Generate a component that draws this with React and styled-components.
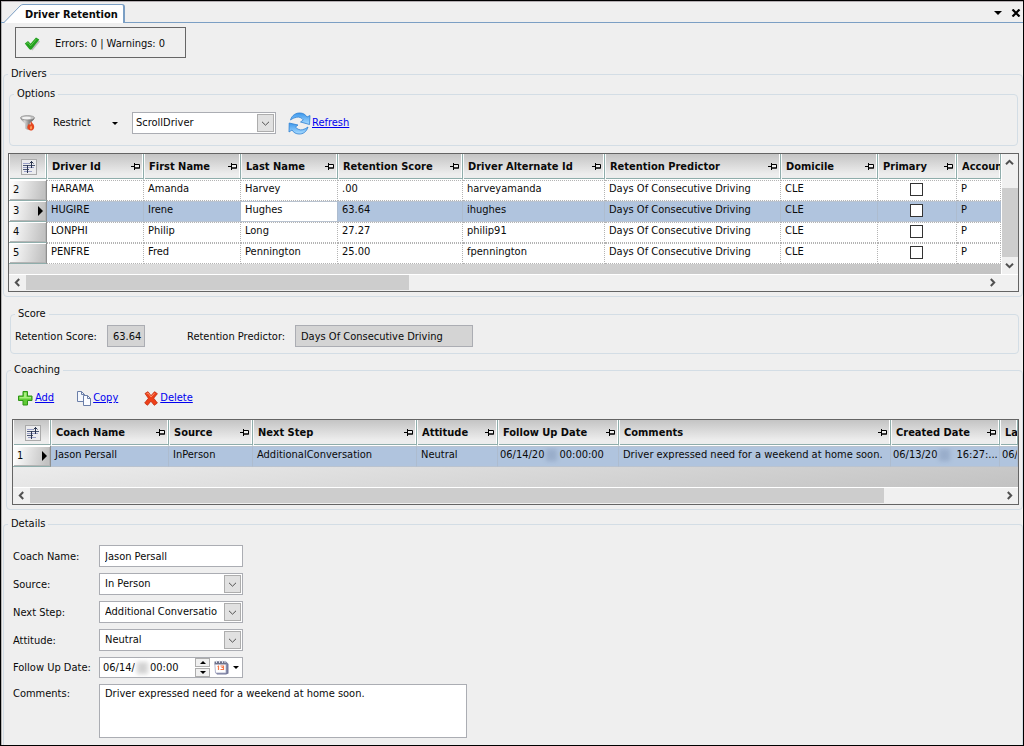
import React from "react";
import styled, { createGlobalStyle } from "styled-components";

const Global = createGlobalStyle`
  *, *::before, *::after { box-sizing: border-box; }
  body { margin: 0; background: #efefef; }
  body, button, input, select, textarea {
    font-family: "DejaVu Sans Condensed", "Noto Sans", sans-serif;
    font-size: 11px;
    line-height: 14px;
    color: #0a0a0a;
  }
`;

const Shell = styled.div`
  min-height: 100vh;
  display: flex;
  flex-direction: column;
  background: #efefef;
  border: 1px solid #000;
  box-shadow: inset 1px 0 0 #b5b5b5;
  overflow: hidden;
`;

const TabBar = styled.header`
  display: flex;
  justify-content: space-between;
  align-items: flex-end;
  height: 22px;
  padding-left: 3px;
  border-top: 1px solid #b5afb3;
  border-bottom: 1px solid #7b9fc4;
`;

const Tab = styled.div`
  display: flex;
  height: 19px;
  margin-bottom: -1px;
`;

const TabFace = styled.h1`
  margin: 0;
  height: 19px;
  padding: 3px 5px 0 2px;
  font-size: 11px;
  line-height: 14px;
  white-space: nowrap;
  background: #fff;
  border-top: 1px solid #7b9fc4;
  border-right: 2px solid #7b9fc4;
  border-top-right-radius: 3px;
`;

const TabTools = styled.div`
  display: flex;
  align-items: center;
  gap: 9px;
  height: 18px;
  padding-right: 2px;
`;

const IconButton = styled.button`
  display: flex;
  align-items: center;
  justify-content: center;
  padding: 0;
  border: 0;
  background: none;
`;

const Page = styled.main`
  flex: 1;
  display: flex;
  flex-direction: column;
  padding: 4px 0 0 2px;
`;

const StatusBox = styled.div`
  align-self: flex-start;
  display: flex;
  align-items: center;
  gap: 14px;
  width: 171px;
  height: 31px;
  margin: 0 0 9px 12px;
  padding: 3px 8px 0;
  border: 1px solid #666;
  white-space: nowrap;
`;

const Group = styled.fieldset`
  min-width: 0;
  margin: ${(p) => p.$margin || "0"};
  padding: ${(p) => p.$padding || "0 3px 4px 4px"};
  border: 1px solid #d3dde5;
  border-radius: 4px;
  ${(p) => p.$open && "flex: 1; border-bottom: 0; border-radius: 4px 4px 0 0;"}
`;

const Legend = styled.legend`
  padding: 0 3px;
  line-height: 14px;
`;

const Row = styled.div`
  display: flex;
  align-items: center;
`;

const RestrictButton = styled.button`
  display: flex;
  align-items: center;
  width: 84px;
  padding: 0 14px 0 5px;
  border: 0;
  background: none;
`;

const RestrictText = styled.span`
  flex: 1;
  text-align: left;
`;

const SelectBox = styled.div`
  position: relative;
  width: 144px;
  height: 22px;
`;

const SelectField = styled.select`
  appearance: none;
  width: 100%;
  height: 22px;
  margin: 0;
  padding: 0 20px 0 ${(p) => (p.$tight ? "3px" : "5px")};
  border: 1px solid #abadb3;
  border-radius: 0;
  background: #fff;
`;

const SelectArrow = styled.span`
  position: absolute;
  top: 2px;
  right: 2px;
  width: 17px;
  height: 18px;
  display: flex;
  align-items: center;
  justify-content: center;
  border: 1px solid #adadad;
  background: #e1e1e1;
  pointer-events: none;
`;

const ActionLink = styled.a`
  display: flex;
  align-items: center;
  gap: ${(p) => p.$gap || "2px"};
  color: #0000f0;
  text-decoration: underline;
`;

const GridFrame = styled.div`
  border: 1px solid #646464;
  background: #f0f0f0;
  margin: ${(p) => p.$margin || "0"};
`;

const GridTop = styled.div`
  display: flex;
`;

const GridView = styled.div`
  flex: 1;
  min-width: 0;
  height: ${(p) => p.$height};
  overflow: hidden;
  background: linear-gradient(173deg, #fafafa, #c2c2c2);
`;

const Table = styled.table`
  width: 100%;
  table-layout: fixed;
  border-collapse: separate;
  border-spacing: 0;
`;

const HeadCell = styled.th`
  height: 26px;
  padding: 0;
  overflow: hidden;
  border-left: 1px solid #fafafa;
  border-right: 1px solid #8fadab;
  border-bottom: 1px solid #fff;
  background: linear-gradient(#c4c4c4, #ededed 80%);
  box-shadow: inset 0 -1px 0 #8fadab, inset -1px 0 0 #fff;
`;

const HeadInner = styled.div`
  display: flex;
  align-items: center;
  justify-content: ${(p) => (p.$center ? "center" : "space-between")};
  height: 24px;
  padding: 0 3px 0 4px;
  white-space: nowrap;
`;

const NumberCell = styled.th`
  height: 21px;
  padding: 0;
  border-right: 1px solid #8f8f8f;
  border-bottom: 1px solid #8fadab;
  background: linear-gradient(100deg, #fbfbfb 10%, #c2c2c2 90%);
  box-shadow: inset 1px 1px 0 #fff, inset -1px -1px 0 #b4b4b4;
  font-weight: normal;
`;

const NumberInner = styled.div`
  display: flex;
  align-items: center;
  justify-content: space-between;
  height: 20px;
  padding: 0 3px 0 4px;
`;

const Cell = styled.td`
  height: 21px;
  padding: 1px 0 0 ${(p) => (p.$snug ? "2px" : "4px")};
  overflow: hidden;
  white-space: nowrap;
  vertical-align: top;
  line-height: 14px;
  text-align: left;
  border-top: 1px ${(p) => (p.$selected ? "solid #b9c3d0" : "dotted #b4b4b4")};
  border-bottom: 1px ${(p) => (p.$selected ? "solid #b9c3d0" : "dotted #b4b4b4")};
  border-right: 1px ${(p) => (p.$selected ? "solid #adbccf" : "dotted #b4b4b4")};
  background: ${(p) => (p.$selected && !p.$active ? "#b0c4de" : "#fff")};
`;

const CheckCell = styled(Cell)`
  padding: 2px 1px 0 0;
`;

const CheckBox = styled.input`
  appearance: none;
  display: block;
  width: 13px;
  height: 13px;
  margin: 0 auto;
  border: 1px solid #333;
  background: #fff;
`;

const Stamp = styled.span`
  display: flex;
  align-items: center;
`;

const Smudge = styled.span`
  width: 11px;
  height: 12px;
  margin: 0 ${(p) => p.$after || "2px"} 0 2px;
  background: ${(p) => p.$tone || "#94a8c6"};
  filter: blur(2px);
  opacity: 0.8;
`;

const VBar = styled.div`
  display: flex;
  flex-direction: column;
  width: 17px;
  border-left: 1px solid #fff;
`;

const VTrack = styled.div`
  flex: 1;
  padding-top: 17px;
`;

const VThumb = styled.div`
  height: 69px;
  background: #cdcdcd;
`;

const HBar = styled.div`
  display: flex;
  height: 17px;
  border-top: 1px solid #fff;
  padding-right: ${(p) => (p.$corner ? "17px" : "0")};
`;

const HTrack = styled.div`
  flex: 1;
`;

const HThumb = styled.div`
  width: ${(p) => p.$size};
  height: 15px;
  background: #cdcdcd;
`;

const BarButton = styled(IconButton)`
  width: ${(p) => (p.$vertical ? "14px" : "17px")};
  height: ${(p) => (p.$vertical ? "17px" : "15px")};
`;

const FieldLabel = styled.label`
  width: ${(p) => p.$width};
  padding-top: 1px;
  white-space: nowrap;
`;

const TextField = styled.input`
  width: ${(p) => p.$width || "144px"};
  height: 22px;
  margin: 0;
  padding: 0 ${(p) => (p.$tight ? "1px" : "5px")} 0 5px;
  border: 1px solid #abadb3;
  background: ${(p) => (p.readOnly ? "#d4d4d4" : "#fff")};
`;

const Form = styled.div`
  display: grid;
  grid-template-columns: 86px 1fr;
  row-gap: 6px;
  align-items: center;
  padding: 14px 5px 7px;
`;

const DateBox = styled.div`
  display: flex;
  align-items: center;
  width: 144px;
  height: 21px;
  padding: 0 3px;
  border: 1px solid #abadb3;
  background: #fff;
`;

const DatePart = styled.input`
  width: ${(p) => p.$width};
  height: 17px;
  padding: 0;
  border: 0;
  background: none;
`;

const Spinner = styled.div`
  display: flex;
  flex-direction: column;
  gap: 1px;
  margin-left: auto;
`;

const SpinButton = styled(IconButton)`
  width: 15px;
  height: 9px;
  border: 1px solid #adadad;
  background: #f0f0f0;
`;

const CalendarButton = styled(IconButton)`
  gap: 4px;
  margin-left: 4px;
`;

const TopLabel = styled(FieldLabel)`
  align-self: start;
  padding-top: 3px;
`;

const NoteArea = styled.textarea`
  display: block;
  width: 368px;
  max-width: 100%;
  height: 54px;
  margin: 0;
  padding: 2px 5px;
  border: 1px solid #abadb3;
  background: #fff;
  resize: none;
`;

const TabSlope = () => (
  <svg width="19" height="19" viewBox="0 0 19 19">
    <path d="M0 19 L16 2 Q17.500 .5 19 .5 V19 Z" fill="#fff" />
    <path d="M0 18.500 L16 2 Q17.500 .5 19 .5" fill="none" stroke="#7b9fc4" />
  </svg>
);

const Caret = ({ up, w = 6, h = 3 }) => (
  <svg width={w} height={h} viewBox="0 0 6 3">
    <path d={up ? "M0 3 H6 L3 0 Z" : "M0 0 H6 L3 3 Z"} fill="#000" />
  </svg>
);

const CloseIcon = () => (
  <svg width="10" height="8" viewBox="0 0 10 8">
    <path d="M1.500 .5 L8.500 7.500 M8.500 .5 L1.500 7.500" stroke="#000" strokeWidth="2.200" />
  </svg>
);

const CheckIcon = () => (
  <svg width="17" height="15" viewBox="0 0 17 15">
    <path d="M2 8 L5.500 5.500 L8 8.500 L13 2.500 L16 4.500 L8.500 13.500 Z" fill="#9a9a9a" opacity=".6" />
    <path d="M.8 6.500 L4 4 L6.500 6.800 L12 .6 L15.300 2.500 L7.800 12 Q6.500 13.300 5.200 12 Z" fill="#23a01f" />
    <path d="M2.500 6.700 L4 5.600 L6.600 8.800 L12.200 2.200" fill="none" stroke="#62cb4f" />
  </svg>
);

const FunnelIcon = () => (
  <svg width="16" height="16" viewBox="0 0 16 16">
    <defs>
      <linearGradient id="steel">
        <stop offset="0" stopColor="#8a8a8a" />
        <stop offset=".3" stopColor="#d8d8d8" />
        <stop offset=".6" stopColor="#8c8c8c" />
        <stop offset="1" stopColor="#5c5c5c" />
      </linearGradient>
    </defs>
    <path d="M.5 2.800 C.5 5.500 4 7 5 9 V13.500 Q7 15.500 9.500 14 V9 C10.500 7 14.500 5.500 14.500 2.800 Z" fill="url(#steel)" />
    <ellipse cx="7.500" cy="2.800" rx="7" ry="2.200" fill="#c4c4c4" stroke="#8b8b8b" strokeWidth=".7" />
    <ellipse cx="6.500" cy="3" rx="4.500" ry="1.200" fill="#f2f2f2" />
    <path d="M11 6 C11.500 8 14.500 9 14.200 12.200 C14 14.700 12 15.700 10.500 15.500 C8.500 15.300 6.800 13.500 7.500 11.300 C7.800 10.300 8.500 10 8.700 8.800 C9.600 9.100 10 10 10 10 C11 9 10.500 7.300 11 6Z" fill="#e5461e" />
    <path d="M11 10.500 C12.500 12 12.500 13.500 11 14.500 C9.500 14 9.500 12.500 11 10.500Z" fill="#ff9a50" />
  </svg>
);

const RefreshIcon = () => (
  <svg width="23" height="23" viewBox="0 0 23 23">
    <defs>
      <linearGradient id="sky" x1="0" y1="0" x2="0" y2="1">
        <stop offset="0" stopColor="#3b97ec" />
        <stop offset="1" stopColor="#a8dbff" />
      </linearGradient>
    </defs>
    <path d="M2.500 8 C4 3 8 .8 12 1 C15 1 17.500 2.500 19 5 L22 3.500 L21.500 12.500 L12.500 10 L15.300 8 C13.500 5.500 11 4.700 8.500 5.300 C6 5.900 4.500 6.500 2.500 8Z" fill="url(#sky)" stroke="#2f80d2" strokeWidth=".8" />
    <path d="M20 15 C18.500 20 15 22.200 11 22 C8 22 5.500 20.500 4 18 L1 20 L1.200 11 L10 13 L7.500 15 C9.500 17.500 12 18.300 14.500 17.700 C17 17 18 16.300 20 15Z" fill="url(#sky)" stroke="#2f80d2" strokeWidth=".8" />
  </svg>
);

const AddIcon = () => (
  <svg width="15" height="15" viewBox="0 0 15 15">
    <path d="M5 .5 H9.500 V5 H14 V9.500 H9.500 V14 H5 V9.500 H.5 V5 H5 Z" fill="#5fcb35" stroke="#2f9415" />
    <path d="M6 1.500 H8.500 V6 H13 V7.500 H1.500 V6 H6 Z" fill="#a8ee80" />
  </svg>
);

const CopyIcon = () => (
  <svg width="14" height="15" viewBox="0 0 14 15">
    <path d="M.5 .5 H4.500 L7.500 3.500 V10.500 H.5 Z" fill="#f4f7fc" stroke="#6a7ea8" />
    <path d="M4.500 .5 V3.500 H7.500" fill="none" stroke="#6a7ea8" />
    <path d="M6.500 4.500 H10.500 L13.500 7.500 V14.500 H6.500 Z" fill="#f9fbff" stroke="#6a7ea8" />
    <path d="M10.500 4.500 V7.500 H13.500" fill="none" stroke="#6a7ea8" />
  </svg>
);

const DeleteIcon = () => (
  <svg width="14" height="15" viewBox="0 0 14 15">
    <path d="M1 2.500 L4 .7 L7 4.700 L10.500 .7 L13.400 2.700 L9.700 7.200 L13.400 12 L10.300 14.300 L6.900 10.200 L3.500 14.300 L.7 12 L4.400 7.300 Z" fill="#ee3f18" stroke="#c22708" strokeWidth=".8" />
    <path d="M2.500 2.800 L4 2 L7 6 L10.500 2.200" fill="none" stroke="#ff8e66" />
  </svg>
);

const PinIcon = () => (
  <svg width="9" height="7" viewBox="0 0 9 7">
    <path d="M0 3.500 H3" stroke="#000" />
    <path d="M3.500 0 V7" stroke="#000" />
    <path d="M4 1.500 H8.500 V5 H4" fill="#eee" stroke="#000" />
    <path d="M4 5 H9" stroke="#000" />
  </svg>
);

const ChooserIcon = () => (
  <svg width="16" height="16" viewBox="0 0 16 16">
    <rect x=".5" y=".5" width="15" height="15" fill="#ececee" stroke="#aaa" />
    <path d="M2 4.500 H8 M2 8.500 H13 M3 12.500 H11" stroke="#9aa0c8" />
    <path d="M2 6.500 H14 M2 10.500 H8" stroke="#4a5674" />
    <path d="M6.500 6 V14 M10.500 2 V9 M8.500 4.500 L10.500 2.500 L12.500 4.500" fill="none" stroke="#2c3650" />
  </svg>
);

const Pointer = () => (
  <svg width="5" height="10" viewBox="0 0 5 10">
    <path d="M0 0 V10 L5 5 Z" fill="#000" />
  </svg>
);

const turns = { left: 90, up: 180, right: 270, down: 0 };
const Chevron = ({ dir = "down", thick = 2 }) => (
  <svg width="9" height="9" viewBox="0 0 9 9">
    <path d="M1 2.800 L4.500 6.200 L8 2.800" transform={`rotate(${turns[dir]} 4.500 4.500)`} fill="none" stroke="#505050" strokeWidth={thick} />
  </svg>
);

const CalendarIcon = () => (
  <svg width="15" height="15" viewBox="0 0 15 15">
    <path d="M2 1.500 H12 L14.500 4 V13.500 L12 14.500 H3 L1.500 12.500 Z" fill="#767b9c" />
    <path d="M.8 4 H12 V13 H1.500 Z" fill="#fff" stroke="#a4a8c4" strokeWidth=".8" />
    <path d="M.5 1.500 H12 V4.300 H.5 Z" fill="#6d718a" />
    <path d="M2.500 .5 V3 M5.500 .5 V3 M8.500 .5 V3 M11 .5 V3" stroke="#dfe2ee" />
    <path d="M4.500 5.500 V10 M3.500 6.500 H4.500 M6.500 6 H9.500 V7.500 H7.500 M9.500 7.500 V9.500 H6.500" fill="none" stroke="#f4764a" strokeWidth="1.200" />
  </svg>
);

const Select = ({ id, label, value, tight }) => (
  <SelectBox>
    <SelectField id={id} aria-label={label} defaultValue={value} $tight={tight}>
      <option>{value}</option>
    </SelectField>
    <SelectArrow>
      <Chevron thick={1} />
    </SelectArrow>
  </SelectBox>
);

const driverColumns = [
  ["Driver Id", 97],
  ["First Name", 97],
  ["Last Name", 97],
  ["Retention Score", 125],
  ["Driver Alternate Id", 142],
  ["Retention Predictor", 176],
  ["Domicile", 97],
  ["Primary", 79],
  ["Accoun"],
];

const drivers = [
  [2, "HARAMA", "Amanda", "Harvey", ".00", "harveyamanda"],
  [3, "HUGIRE", "Irene", "Hughes", "63.64", "ihughes"],
  [4, "LONPHI", "Philip", "Long", "27.27", "philip91"],
  [5, "PENFRE", "Fred", "Pennington", "25.00", "fpennington"],
].map(([n, ...cells]) => ({
  n,
  cells: [...cells, "Days Of Consecutive Driving", "CLE", false, "P"],
}));

const coachColumns = [
  ["Coach Name", 118],
  ["Source", 84],
  ["Next Step", 164],
  ["Attitude", 81],
  ["Follow Up Date", 121],
  ["Comments", 272],
  ["Created Date", 109],
  ["La"],
];

const coaching = [
  {
    n: 1,
    cells: [
      "Jason Persall",
      "InPerson",
      "AdditionalConversation",
      "Neutral",
      <Stamp key="f">06/14/20<Smudge />00:00:00</Stamp>,
      "Driver expressed need for a weekend at home soon.",
      <Stamp key="c">06/13/20<Smudge $after="6px" />16:27:...</Stamp>,
      "06/",
    ],
  },
];

function DataGrid({ columns, rows, selected, active, snug = [], height, thumb, vertical, margin }) {
  return (
    <GridFrame $margin={margin}>
      <GridTop>
        <GridView $height={height}>
          <Table>
            <colgroup>
              <col width="38" />
              {columns.map(([name, width]) => (
                <col key={name} width={width} />
              ))}
            </colgroup>
            <thead>
              <tr>
                <HeadCell>
                  <HeadInner $center>
                    <ChooserIcon />
                  </HeadInner>
                </HeadCell>
                {columns.map(([name, width]) => (
                  <HeadCell key={name} scope="col">
                    <HeadInner>
                      {name}
                      {width && <PinIcon />}
                    </HeadInner>
                  </HeadCell>
                ))}
              </tr>
            </thead>
            <tbody>
              {rows.map(({ n, cells }) => {
                const on = n === selected;
                return (
                  <tr key={n}>
                    <NumberCell scope="row">
                      <NumberInner>
                        {n}
                        {on && <Pointer />}
                      </NumberInner>
                    </NumberCell>
                    {cells.map((cell, i) =>
                      cell === false ? (
                        <CheckCell key={i} $selected={on}>
                          <CheckBox type="checkbox" aria-label={`Primary, row ${n}`} />
                        </CheckCell>
                      ) : (
                        <Cell
                          key={i}
                          $selected={on}
                          $active={on && i === active}
                          $snug={snug.includes(i)}
                        >
                          {cell}
                        </Cell>
                      )
                    )}
                  </tr>
                );
              })}
            </tbody>
          </Table>
        </GridView>
        {vertical && (
          <VBar>
            <BarButton $vertical aria-label="Scroll up"><Chevron dir="up" /></BarButton>
            <VTrack><VThumb /></VTrack>
            <BarButton $vertical aria-label="Scroll down"><Chevron /></BarButton>
          </VBar>
        )}
      </GridTop>
      <HBar $corner={vertical}>
        <BarButton aria-label="Scroll left"><Chevron dir="left" /></BarButton>
        <HTrack><HThumb $size={thumb} /></HTrack>
        <BarButton aria-label="Scroll right"><Chevron dir="right" /></BarButton>
      </HBar>
    </GridFrame>
  );
}

const ToolRow = styled(Row)`
  height: 44px;
  padding: 0 10px 0 6px;
`;

const ScoreRow = styled(Row)`
  padding: 4px 0 6px;
`;

const LinkRow = styled(Row)`
  height: 42px;
  padding-left: 7px;
`;

const Spacer = styled.span`
  width: ${(p) => p.$width};
`;

export default function App() {
  return (
    <>
      <Global />
      <Shell>
        <TabBar>
          <Tab>
            <TabSlope />
            <TabFace>Driver Retention</TabFace>
          </Tab>
          <TabTools>
            <IconButton aria-label="Tab list"><Caret w={8} h={4} /></IconButton>
            <IconButton aria-label="Close"><CloseIcon /></IconButton>
          </TabTools>
        </TabBar>
        <Page>
          <StatusBox>
            <CheckIcon />
            Errors: 0 | Warnings: 0
          </StatusBox>

          <Group>
            <Legend>Drivers</Legend>
            <Group $margin="6px 1px 7px" $padding="0 4px">
              <Legend>Options</Legend>
              <ToolRow>
                <FunnelIcon />
                <Spacer $width="12px" />
                <RestrictButton>
                  <RestrictText>Restrict</RestrictText>
                  <Caret />
                </RestrictButton>
                <Select label="Restriction" value="ScrollDriver" tight />
                <Spacer $width="12px" />
                <ActionLink href="#refresh" $gap="1px">
                  <RefreshIcon />
                  Refresh
                </ActionLink>
              </ToolRow>
            </Group>
            <DataGrid
              columns={driverColumns}
              rows={drivers}
              selected={3}
              active={2}
              height="120px"
              thumb="40%"
              vertical
            />
          </Group>

          <Group $margin="10px 4px 9px 7px" $padding="0 4px">
            <Legend>Score</Legend>
            <ScoreRow>
              <FieldLabel htmlFor="score" $width="92px">Retention Score:</FieldLabel>
              <TextField id="score" readOnly value="63.64" $width="38px" $tight />
              <Spacer $width="42px" />
              <FieldLabel htmlFor="predictor" $width="108px">Retention Predictor:</FieldLabel>
              <TextField id="predictor" readOnly value="Days Of Consecutive Driving" $width="178px" />
            </ScoreRow>
          </Group>

          <Group $margin="0 0 7px 3px" $padding="0 3px 4px 4px">
            <Legend>Coaching</Legend>
            <LinkRow>
              <ActionLink href="#add"><AddIcon />Add</ActionLink>
              <Spacer $width="23px" />
              <ActionLink href="#copy"><CopyIcon />Copy</ActionLink>
              <Spacer $width="26px" />
              <ActionLink href="#delete"><DeleteIcon />Delete</ActionLink>
            </LinkRow>
            <DataGrid
              columns={coachColumns}
              rows={coaching}
              selected={1}
              snug={[4, 6, 7]}
              height="67px"
              thumb="88%"
              margin="0 0 0 1px"
            />
          </Group>

          <Group $open $padding="0 4px">
            <Legend>Details</Legend>
            <Form>
              <FieldLabel htmlFor="coach">Coach Name:</FieldLabel>
              <TextField id="coach" defaultValue="Jason Persall" />
              <FieldLabel htmlFor="source">Source:</FieldLabel>
              <Select id="source" value="In Person" />
              <FieldLabel htmlFor="step">Next Step:</FieldLabel>
              <Select id="step" value="Additional Conversatio" />
              <FieldLabel htmlFor="attitude">Attitude:</FieldLabel>
              <Select id="attitude" value="Neutral" />
              <FieldLabel htmlFor="followup">Follow Up Date:</FieldLabel>
              <DateBox>
                <DatePart id="followup" defaultValue="06/14/" $width="32px" />
                <Smudge $tone="#c8c8c8" />
                <DatePart aria-label="Follow up time" defaultValue="00:00" $width="40px" />
                <Spinner>
                  <SpinButton aria-label="Later"><Caret up /></SpinButton>
                  <SpinButton aria-label="Earlier"><Caret /></SpinButton>
                </Spinner>
                <CalendarButton aria-label="Open calendar">
                  <CalendarIcon />
                  <Caret />
                </CalendarButton>
              </DateBox>
              <TopLabel htmlFor="comments">Comments:</TopLabel>
              <NoteArea id="comments" defaultValue="Driver expressed need for a weekend at home soon." />
            </Form>
          </Group>
        </Page>
      </Shell>
    </>
  );
}
